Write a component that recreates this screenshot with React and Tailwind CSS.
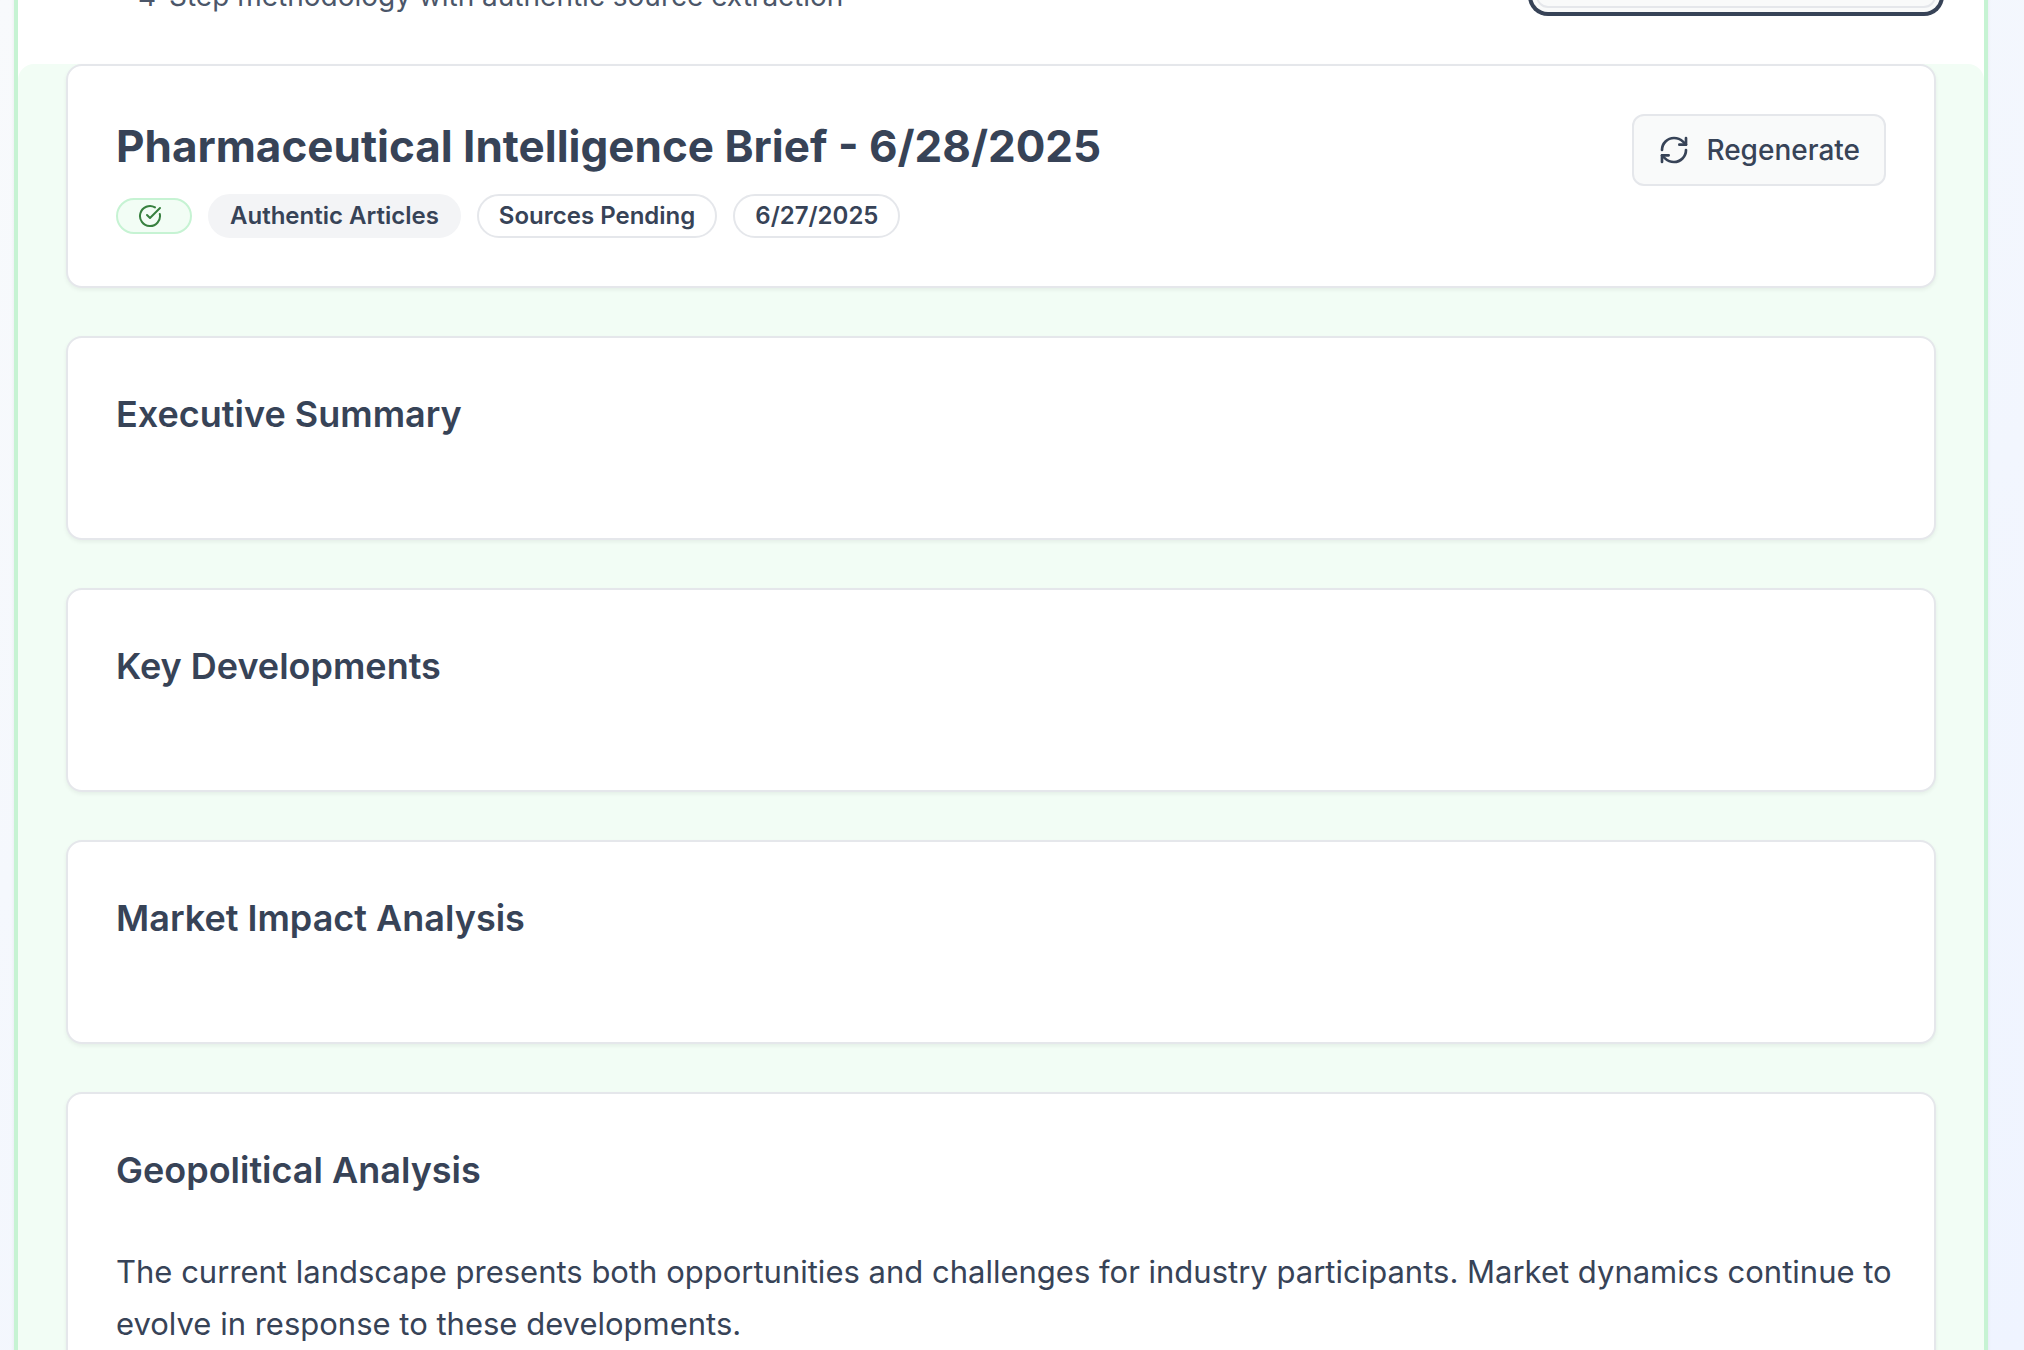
import React from "react";
import { CircleCheckBig, RefreshCw } from "lucide-react";

const sections = [
  { title: "Executive Summary" },
  { title: "Key Developments" },
  { title: "Market Impact Analysis" },
  {
    title: "Geopolitical Analysis",
    body: "The current landscape presents both opportunities and challenges for industry participants. Market dynamics continue to evolve in response to these developments.",
  },
];

function Card({ children }) {
  return (
    <section className="rounded-2xl border-2 border-[#e5e7eb] bg-white p-12 shadow-[0_2px_4px_rgba(0,0,0,0.06)]">
      {children}
    </section>
  );
}

function Badge({ variant, children }) {
  const look =
    variant === "filled" ? "border-[#f3f4f6] bg-[#f3f4f6]" : "border-[#e5e7eb] bg-white";
  return (
    <span className={`rounded-full border-2 px-5 py-1 text-[24px] leading-8 font-semibold ${look}`}>
      {children}
    </span>
  );
}

export default function App() {
  return (
    <div className="h-screen overflow-hidden bg-gradient-to-br from-[#f8fafc] to-[#eff4ff] pr-9 pl-[14px] font-['Inter','Liberation_Sans',sans-serif] text-[#374357]">
      <main className="border-x-4 border-[#c6f3d3] bg-white shadow-[0_2px_4px_rgba(0,0,0,0.06)]">
        <header className="-mt-18 flex items-center justify-between px-12 pb-12">
          <div className="pt-12 pl-18">
            <p className="text-[28px] leading-10 text-[#4b5669]">
              4-Step methodology with authentic source extraction
            </p>
          </div>
          <button
            type="button"
            aria-label="Brief options"
            className="h-18 w-[400px] rounded-xl border-2 border-[#e5e7eb] bg-[#f9fafa] ring-4 ring-[#374357] ring-offset-4 ring-offset-[#f9fafa]"
          />
        </header>

        <div className="flex flex-col gap-12 rounded-2xl bg-[#f2fdf5] px-12 pb-12">
          <Card>
            <div className="flex items-start justify-between">
              <div>
                <h1 className="text-[44px] leading-[64px] font-bold">
                  Pharmaceutical Intelligence Brief - 6/28/2025
                </h1>
                <div className="mt-4 flex items-center gap-4">
                  <span className="rounded-full border-2 border-[#c6f3d3] bg-[#f2fdf5] py-1 pr-7 pl-5 text-[#37803f]">
                    <CircleCheckBig className="size-6" />
                  </span>
                  <Badge variant="filled">Authentic Articles</Badge>
                  <Badge>Sources Pending</Badge>
                  <Badge>6/27/2025</Badge>
                </div>
              </div>
              <button
                type="button"
                className="flex h-18 items-center gap-4 rounded-xl border-2 border-[#e5e7eb] bg-[#f9fafa] px-6 text-[28px] leading-10 font-medium"
              >
                <RefreshCw className="size-8" />
                Regenerate
              </button>
            </div>
          </Card>

          {sections.map(({ title, body }) => (
            <Card key={title}>
              <h2 className="text-[36px] leading-[56px] font-semibold">{title}</h2>
              <p className="-mr-4 mt-12 text-[31px] leading-[52px]">{body}</p>
            </Card>
          ))}
        </div>
      </main>
    </div>
  );
}
